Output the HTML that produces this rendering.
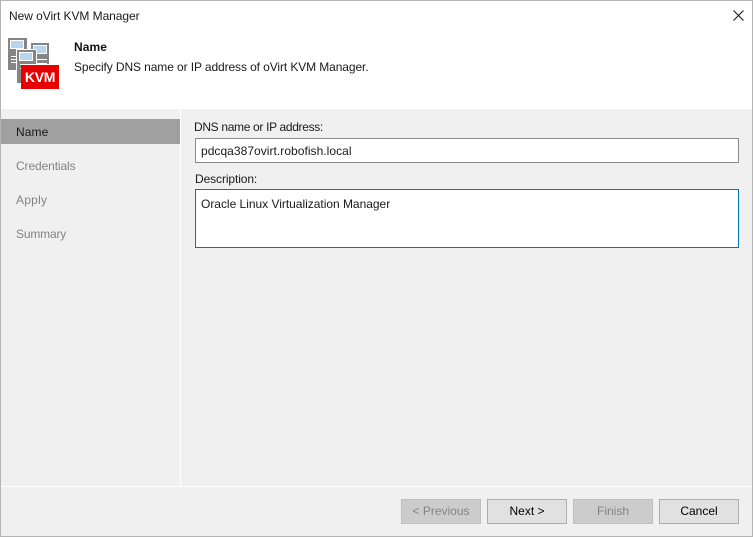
<!DOCTYPE html>
<html><head><meta charset="utf-8">
<style>
html,body{margin:0;padding:0;width:753px;height:537px;overflow:hidden;background:#f0f0f0}
body{position:relative;font-family:"Liberation Sans",sans-serif;font-size:12px;color:#1a1a1a}
.a{position:absolute;white-space:nowrap;line-height:16px}
.box{position:absolute;box-sizing:border-box;background:#fff}
.btn{position:absolute;box-sizing:border-box;top:499px;width:80px;height:25px;border:1px solid #adadad;background:#e1e1e1;text-align:center;line-height:23px;color:#000}
.dis{background:#cccccc;border-color:#bfbfbf;color:#838383}
.side{color:#838383}
</style></head><body>
<div class="box" style="left:0;top:0;width:753px;height:109px"></div>
<div class="box" style="left:180px;top:109px;width:1px;height:377px;background:#fff"></div>
<div class="box" style="left:1px;top:486px;width:751px;height:1px;background:#fff"></div>
<div class="box" style="left:1px;top:119px;width:179px;height:25px;background:#a0a0a0"></div>

<div class="a" style="left:9px;top:8px;letter-spacing:-.06px">New oVirt KVM Manager</div>
<svg class="a" style="left:733px;top:10px" width="11" height="11" viewBox="0 0 11 11"><path d="M.5.5l10 10M10.5.5l-10 10" stroke="#111" stroke-width="1" fill="none"/></svg>

<svg class="a" style="left:8px;top:38px" width="52" height="52" viewBox="0 0 52 52" shape-rendering="crispEdges">
<rect x="0" y="0" width="19" height="32" fill="#858585"/>
<rect x="2" y="2" width="14" height="9" fill="#fff"/><rect x="3" y="3" width="12" height="7" fill="#b9d5ee"/>
<rect x="3" y="18" width="5" height="1" fill="#fff"/><rect x="3" y="21" width="5" height="1" fill="#fff"/><rect x="3" y="24" width="5" height="1" fill="#fff"/>
<rect x="23" y="5" width="18" height="28" fill="#858585"/>
<rect x="25" y="7" width="14" height="9" fill="#fff"/><rect x="26" y="8" width="12" height="7" fill="#b9d5ee"/>
<rect x="29" y="21" width="10" height="1" fill="#fff"/><rect x="29" y="25" width="10" height="1" fill="#fff"/>
<rect x="8" y="11" width="21" height="34" fill="#fff"/>
<rect x="9" y="12" width="19" height="33" fill="#858585"/>
<rect x="11" y="14" width="14" height="9" fill="#fff"/><rect x="12" y="15" width="12" height="7" fill="#b9d5ee"/>
<rect x="12" y="26" width="7" height="1" fill="#fff"/>
<rect x="12" y="30" width="7" height="1" fill="#fff"/>
<rect x="12" y="26" width="40" height="1" fill="#fff"/>
<rect x="13" y="27" width="38" height="24" fill="#e60000"/>
</svg>
<div class="a" style="left:21px;top:65px;width:38px;height:24px;line-height:25px;text-align:center;color:#fff;font-weight:bold;font-size:14px;letter-spacing:-.3px">KVM</div>

<div class="a" style="left:74px;top:39px;font-weight:bold;color:#111;letter-spacing:.1px">Name</div>
<div class="a" style="left:74px;top:59px;letter-spacing:-.1px">Specify DNS name or IP address of oVirt KVM Manager.</div>

<div class="a" style="left:16px;top:124px;letter-spacing:.1px">Name</div>
<div class="a side" style="left:16px;top:158px;letter-spacing:-.11px">Credentials</div>
<div class="a side" style="left:16px;top:192px;letter-spacing:.25px">Apply</div>
<div class="a side" style="left:16px;top:226px;letter-spacing:-.18px">Summary</div>

<div class="a" style="left:194px;top:119px;letter-spacing:-.33px">DNS name or IP address:</div>
<div class="box" style="left:195px;top:138px;width:544px;height:25px;border:1px solid #8a8a8a"></div>
<div class="a" style="left:201px;top:143px;letter-spacing:.04px">pdcqa387ovirt.robofish.local</div>
<div class="a" style="left:195px;top:171px;letter-spacing:-.1px">Description:</div>
<div class="box" style="left:195px;top:189px;width:544px;height:59px;border:1px solid #0078b4"></div>
<div class="a" style="left:201px;top:196px;letter-spacing:-.02px">Oracle Linux Virtualization Manager</div>

<div class="btn dis" style="left:401px">&lt; Previous</div>
<div class="btn" style="left:487px">Next &gt;</div>
<div class="btn dis" style="left:573px">Finish</div>
<div class="btn" style="left:659px">Cancel</div>

<div class="a" style="left:0;top:0;width:753px;height:1px;background:#b4b4b4"></div>
<div class="a" style="left:0;top:536px;width:753px;height:1px;background:#b4b4b4"></div>
<div class="a" style="left:0;top:0;width:1px;height:537px;background:#b4b4b4"></div>
<div class="a" style="left:752px;top:0;width:1px;height:537px;background:#b4b4b4"></div>
</body></html>
